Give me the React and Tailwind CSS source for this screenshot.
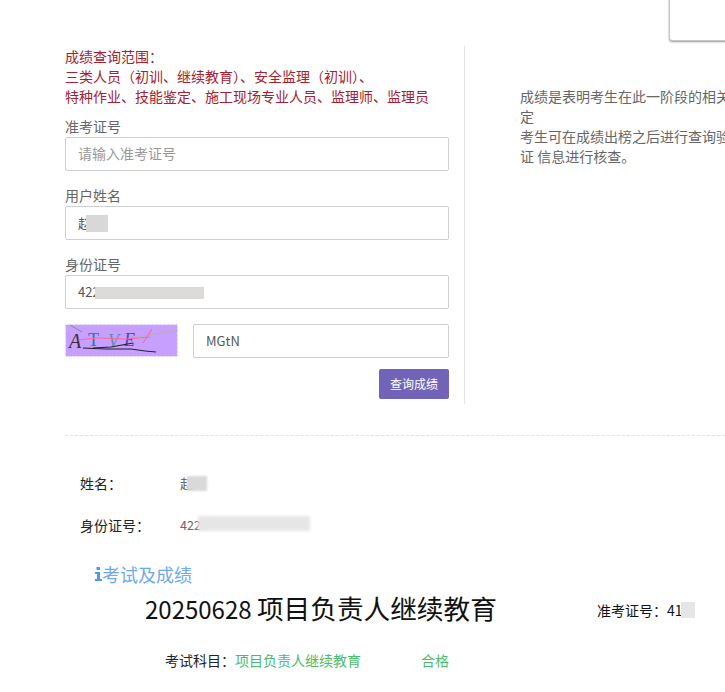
// App.jsx
const FONT = `font-['Noto_Sans_CJK_SC','Noto_Sans',sans-serif]`;

const inputClass =
  "block w-full h-[34px] px-[12px] pb-[2px] border border-[#ccd0d2] rounded-[2px] bg-white text-[13px] text-[#555] outline-none placeholder:text-[#999] placeholder:text-[14px]";

function Captcha() {
  return (
    <svg width="113" height="33" viewBox="0 0 113 33" className="block shrink-0">
      <rect x="0.5" y="0.5" width="112" height="32" fill="#c79fff" stroke="#f3ecff" strokeDasharray="2 2" />
      <line x1="5" y1="1" x2="17" y2="8" stroke="#8b8b8b" strokeWidth="1" />
      <text x="4" y="24" fontFamily="Liberation Serif" fontStyle="italic" fontSize="20" fill="#3b2a3a">A</text>
      <text x="23" y="22" fontFamily="Liberation Serif" fontSize="18" fill="#3c6fb5">T</text>
      <text x="43" y="23" fontFamily="Liberation Serif" fontStyle="italic" fontSize="18" fill="#5b8fb0">V</text>
      <text x="59" y="22" fontFamily="Liberation Serif" fontStyle="italic" fontSize="18" fill="#4b3fd0">E</text>
      <path d="M68 14 L113 6" stroke="#b5b5a8" strokeWidth="1.2" fill="none" />
      <path d="M13 16 L32 14 L62 15 L85 13" stroke="#f0709a" strokeWidth="1" fill="none" />
      <line x1="78" y1="19" x2="87" y2="5" stroke="#ef6a8e" strokeWidth="1" />
      <path d="M28 24 L46 23 L68 19" stroke="#222" strokeWidth="1.2" fill="none" />
      <path d="M18 24 L40 25 L66 25 L80 27 L91 28" stroke="#222" strokeWidth="1" fill="none" />
    </svg>
  );
}

function Field({ label, value, placeholder, mask, className }) {
  return (
    <div className={className}>
      <div className="h-[20px] leading-[18px] text-[14px] text-[#666]">{label}</div>
      <div className="relative">
        <input className={inputClass} defaultValue={value} placeholder={placeholder} readOnly />
        {mask}
      </div>
    </div>
  );
}

export default function App() {
  return (
    <div className={`relative w-[725px] h-[692px] overflow-hidden bg-white ${FONT}`}>
      {/* top right dropdown corner */}
      <div className="absolute left-[669px] top-[-4px] w-[70px] h-[45px] bg-white border border-[#c4c4c4] rounded-[3px] shadow-[0_1px_2px_rgba(0,0,0,0.4)]" />

      {/* query form */}
      <div className="flex pt-[46px] pl-[65px] h-[435px]">
        <div className="w-[400px] h-[358px] shrink-0 pr-[15px] border-r border-[#e4e4e4]">
          <div className="text-[14px] leading-[20px] text-[#a5212f]">
            <div>成绩查询范围：</div>
            <div>三类人员（初训、继续教育）、安全监理（初训）、</div>
            <div>特种作业、技能鉴定、施工现场专业人员、监理师、监理员</div>
          </div>
          <Field className="mt-[11px]" label="准考证号" placeholder="请输入准考证号" />
          <Field
            className="mt-[15px]"
            label="用户姓名"
            value="赵"
            mask={<div className="absolute left-[21px] top-[9px] w-[22px] h-[17px] bg-[#d8d8d8] blur-[0.5px]" />}
          />
          <Field
            className="mt-[15px]"
            label="身份证号"
            value="422"
            mask={<div className="absolute left-[30px] top-[12px] w-[109px] h-[12px] bg-[#dcdbd9] blur-[0.5px]" />}
          />
          <div className="flex gap-[15px] mt-[15px]">
            <Captcha />
            <input className={inputClass} defaultValue="MGtN" readOnly />
          </div>
          <div className="flex justify-end mt-[11px]">
            <button className="w-[70px] h-[30px] rounded-[2px] bg-[#7164b8] text-white text-[12px]">查询成绩</button>
          </div>
        </div>
        <div className="pl-[55px] pt-[40px] text-[14px] leading-[20px] text-[#666] whitespace-nowrap">
          <div>成绩是表明考生在此一阶段的相关</div>
          <div>定</div>
          <div>考生可在成绩出榜之后进行查询验</div>
          <div>证 信息进行核查。</div>
        </div>
      </div>

      <div className="ml-[65px] border-t border-dashed border-[#e2e2e2]" />

      {/* query result */}
      <div className="pl-[80px] pt-[37px] text-[14px] leading-[20px]">
        <div className="flex items-center h-[20px] text-[#222]">
          <span className="w-[100px]">姓名：</span>
          <span className="relative text-[#666]">
            赵
            <span className="absolute left-[7px] top-[3px] w-[20px] h-[15px] bg-[#d9d9d9] blur-[1px]" />
          </span>
        </div>
        <div className="flex items-center h-[20px] mt-[22px] text-[#222]">
          <span className="w-[100px]">身份证号：</span>
          <span className="relative text-[#666] text-[12.5px]">
            422
            <span className="absolute left-[18px] top-[1px] w-[112px] h-[15px] bg-[#e6e6e6] blur-[1.5px]" />
          </span>
        </div>
      </div>

      <div className="flex items-center ml-[95px] mt-[27px] h-[24px] text-[18px] text-[#6ea9ec]">
        <svg width="7" height="14" viewBox="0 0 7 14" className="block shrink-0" fill="#4a9bf0">
          <rect x="1.5" y="0" width="3.5" height="3" />
          <path d="M0 5H5V12H7V14H0V12H2V7H0Z" />
        </svg>
        <span>考试及成绩</span>
      </div>

      <div className="flex items-center mt-[6px] h-[36px] whitespace-nowrap text-[#111]">
        <span className="ml-[145px] w-[452px] pb-[4px] text-[26.67px]">
          <span className="text-[24px]">20250628 </span>项目负责人继续教育
        </span>
        <span className="relative text-[14px]">
          准考证号：41
          <span className="absolute left-[84px] top-[2px] w-[14px] h-[16px] bg-[#e6e6e6]" />
        </span>
      </div>

      <div className="flex items-center mt-[22px] ml-[165px] h-[20px] text-[14px] text-[#222] whitespace-nowrap">
        <span className="w-[70px]">考试科目：</span>
        <span className="w-[186px] text-[#4cbb6c]">项目负责人继续教育</span>
        <span className="text-[#4cbb6c]">合格</span>
      </div>
    </div>
  );
}
